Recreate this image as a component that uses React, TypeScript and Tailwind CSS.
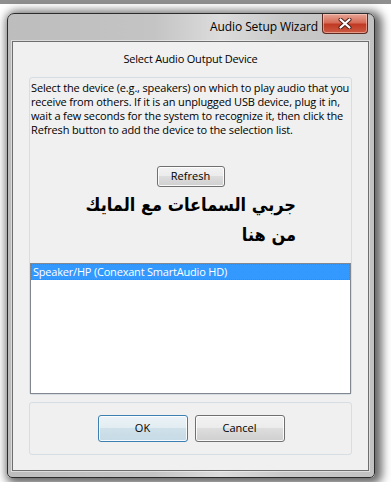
export default function App() {
  const ui = { fontFamily: '"Open Sans", "Liberation Sans", sans-serif' };
  const btn =
    "h-[27px] w-[90px] rounded-[3px] border text-[11px] text-black flex items-center justify-center shadow-[inset_0_0_0_1px_rgba(255,255,255,0.85)]";
  return (
    <div className="w-[391px] h-[482px] bg-white overflow-hidden flex flex-col" style={ui}>
      <div className="h-[4px] shrink-0 bg-[#8f8f8f]" />
      <div className="pt-[9px] pl-[7px]">
        <div className="w-[368px] h-[465px] border border-[#2c2c2c] rounded-t-[7px] rounded-b-[5px] bg-[linear-gradient(90deg,#bdbdbd_0%,#c4c4c4_40%,#dcdcdc_58%,#c9c9c9_75%,#c2c2c2_100%)] shadow-[3px_2px_10px_4px_rgba(0,0,0,0.6)] flex flex-col pl-[4px] pr-[5px] pb-[6px]">
          <div className="h-[27px] shrink-0 flex justify-end items-start gap-[4px] pr-[1px]">
            <div className="h-[27px] flex items-center text-[12px] text-black leading-none pb-[1px] whitespace-nowrap tracking-[-0.1px]">
              Audio Setup Wizard
            </div>
            <div className="w-[46px] h-[20px] rounded-b-[4px] border border-t-0 border-[#5e2a20] bg-[linear-gradient(#e8a596_0%,#d66c57_45%,#c13a24_55%,#cc5a43_100%)] flex items-center justify-center shadow-[inset_0_0_0_1px_rgba(255,220,210,0.5)]">
              <svg width="14" height="11" viewBox="0 0 14 11">
                <path d="M2.5 1.5 L11.5 9.5 M11.5 1.5 L2.5 9.5" stroke="#4a1d15" strokeWidth="4" strokeLinecap="round" />
                <path d="M2.5 1.5 L11.5 9.5 M11.5 1.5 L2.5 9.5" stroke="#ffffff" strokeWidth="2.2" strokeLinecap="round" />
              </svg>
            </div>
          </div>
          <div className="h-[430px] border border-[#6e6e6e] bg-[#f0f0f0] flex flex-col shadow-[0_0_0_1px_rgba(255,255,255,0.45)]">
            <div className="h-[35px] shrink-0 flex items-center justify-center text-[11px] text-black whitespace-nowrap tracking-[-0.2px]">
              Select Audio Output Device
            </div>
            <div className="mx-[16px] h-[318px] shrink-0 border border-[#d6dde3] rounded-[3px] flex flex-col">
              <div className="h-[88px] shrink-0 pl-[1px] pt-[3px] text-[11px] leading-[14px] text-black whitespace-nowrap tracking-[-0.15px]">
                <div>Select the device (e.g., speakers) on which to play audio that you</div>
                <div>receive from others. If it is an unplugged USB device, plug it in,</div>
                <div>wait a few seconds for the system to recognize it, then click the</div>
                <div>Refresh button to add the device to the selection list.</div>
              </div>
              <div className="h-[21px] shrink-0 flex justify-center">
                <div className="w-[68px] h-[21px] rounded-[3px] border border-[#707070] bg-[linear-gradient(#f2f2f2_0%,#ebebeb_50%,#dddddd_50%,#cfcfcf_100%)] shadow-[inset_0_0_0_1px_rgba(255,255,255,0.85)] flex items-center justify-center text-[11px] text-black">
                  Refresh
                </div>
              </div>
              <div
                dir="rtl"
                className="h-[76px] shrink-0 pr-[55px] pt-[3px] text-right text-[18px] font-bold leading-[30px] text-black whitespace-nowrap"
                style={{ fontFamily: '"DejaVu Sans Condensed", "DejaVu Sans", sans-serif' }}
              >
                <div>جربي السماعات مع المايك</div>
                <div>من هنا</div>
              </div>
              <div className="h-[131px] shrink-0 border border-[#828790] bg-white">
                <div className="h-[16px] bg-[#3399ff] border border-dotted border-[#c46a1a] text-white text-[11px] leading-[14px] pl-[1px] whitespace-nowrap tracking-[-0.2px]">
                  Speaker/HP (Conexant SmartAudio HD)
                </div>
              </div>
            </div>
            <div className="h-[7px] shrink-0" />
            <div className="mx-[16px] h-[53px] shrink-0 border border-[#d6dde3] rounded-[3px] flex items-center justify-center gap-[7px] pl-[1px]">
              <div className={`${btn} border-[#3c7fb1] bg-[linear-gradient(#ecf3f7_0%,#e1ecf2_50%,#cfe0e9_50%,#c6dbe6_100%)]`}>OK</div>
              <div className={`${btn} border-[#707070] bg-[linear-gradient(#f2f2f2_0%,#ebebeb_50%,#dddddd_50%,#cfcfcf_100%)]`}>Cancel</div>
            </div>
          </div>
        </div>
      </div>
    </div>
  );
}
